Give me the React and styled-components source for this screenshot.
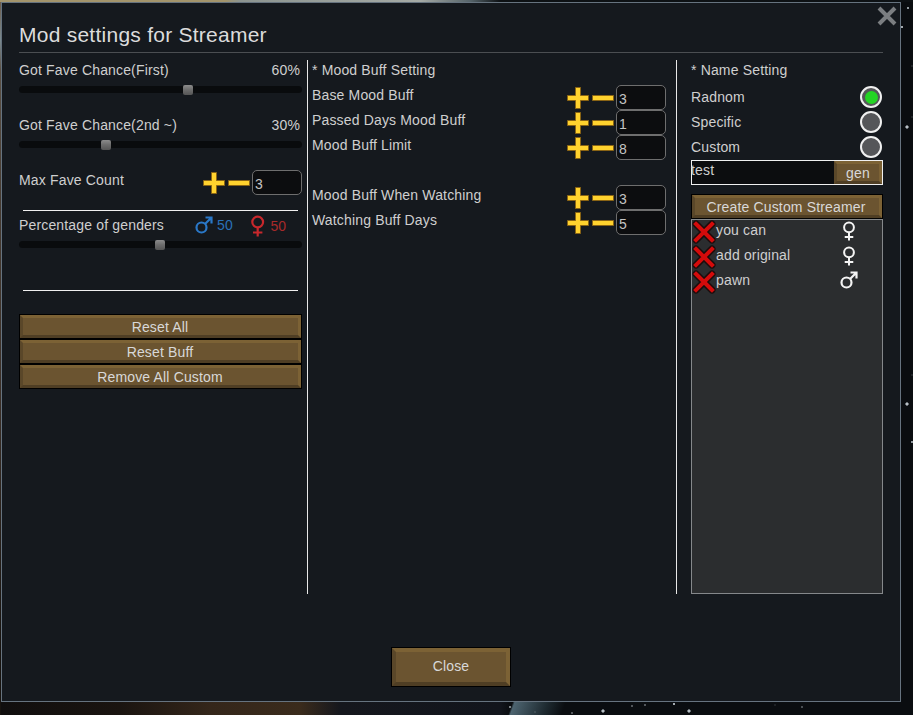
import React from 'react';
import styled, { createGlobalStyle } from 'styled-components';

const Global = createGlobalStyle`
  html, body { margin: 0; padding: 0; background: #0a0d10; }
  body { font-family: "Liberation Sans", Arial, sans-serif; }
`;

const stars = [[908,8,1.3,.7],[902,27,1.2,.8],[907,127,2,.9],[912,66,0.8,.4],[912,117,0.8,.35],[907,404,2,.9],[912,442,1.4,.7],[912,375,0.8,.4],[510,707,1,.8],[603,711,2,.9],[689,711,2,.9],[674,704,1.4,.8],[632,706,1,.5],[645,705,1,.5],[572,713,1,.5],[775,705,0.8,.35],[802,707,1,.45],[535,712,0.8,.4],[600,706,0.7,.4],[878,704,0.7,.3]];
const starLayers = stars.map(([x, y, r, a]) => `radial-gradient(circle ${r}px at ${x}px ${y}px, rgba(201,210,216,${a}) 60%, transparent 100%)`).join(',');

const Desktop = styled.div`
  width: 913px;
  height: 715px;
  overflow: hidden;
  box-sizing: border-box;
  padding: 2px 0 0 1px;
  background:
    ${starLayers},
    linear-gradient(90deg, #a3946b 0, #a3946b 225px, #8c9490 240px, #a5aaa5 420px, #56646a 470px, #0d1114 500px) 0 0 / 100% 2px no-repeat,
    linear-gradient(180deg, #6d5a46 0, #7a8a90 40px, #5b5044 70px, #453a30 200px, #3a2e26 400px, #17130f 650px) 0 0 / 1px 100% no-repeat,
    linear-gradient(110deg, transparent 0 12px, #4d6470 14px, #1e2a30 45px, transparent 62px) 500px 702px / 70px 13px no-repeat,
    linear-gradient(90deg, #100e0e 0, #1a1410 120px, #34261a 210px, #3a2b1c 300px, #15171d 340px, #12151c 500px, #0a0d10 510px) 0 702px / 510px 13px no-repeat,
    #0a0d10;
`;

const Window = styled.div`
  position: relative;
  box-sizing: border-box;
  width: 900px;
  height: 700px;
  padding: 0 17px;
  background: #15191e;
  border: 1px solid #66737f;
  color: #cfcfcf;
  font-size: 14px;
  line-height: 20px;
  letter-spacing: 0.16px;
`;

const CloseX = styled.svg`
  position: absolute;
  top: 3px;
  right: 3px;
  width: 20px;
  height: 20px;
`;

const Title = styled.div`
  box-sizing: border-box;
  height: 50px;
  padding-top: 20px;
  border-bottom: 1px solid #4b4e52;
  font-size: 21px;
  line-height: 24px;
  letter-spacing: 0.25px;
  color: #dcdcdc;
`;

const Columns = styled.div`
  display: flex;
  height: 534px;
  margin-top: 7px;
`;

const LeftColumn = styled.div`
  box-sizing: border-box;
  width: 289px;
  padding-right: 5px;
  border-right: 1px solid #e8e8e8;
`;

const MiddleColumn = styled.div`
  box-sizing: border-box;
  width: 369px;
  padding: 0 10px 0 4px;
  border-right: 1px solid #e8e8e8;
`;

const RightColumn = styled.div`
  width: 192px;
  margin-left: 14px;
`;

const SliderBlock = styled.div`
  height: 55px;
`;

const SpacedRow = styled.div`
  display: flex;
  justify-content: space-between;
  height: 20px;
  padding-right: 2px;
`;

const Track = styled.div`
  position: relative;
  height: 7px;
  margin: 6px 0 7px;
  border-radius: 3.5px;
  background: #090b0d;
`;

const Thumb = styled.div`
  position: absolute;
  top: -1px;
  width: 10px;
  height: 10px;
  margin-left: -5px;
  border-radius: 2px;
  background: linear-gradient(180deg, #8c8c8c 0, #6e6e6e 45%, #555 100%);
`;

const SpinRow = styled.div`
  display: flex;
  height: 25px;
  margin-bottom: ${p => p.$gap || 0}px;
`;

const SpinLabel = styled.div`
  flex: 1;
`;

const SpinIcons = styled.div`
  display: flex;
  align-items: flex-start;
  gap: 3px;
  padding-top: 2px;
  margin-right: 2px;
`;

const Icon = styled.svg`
  display: block;
  flex: none;
`;

const NumBox = styled.div`
  box-sizing: border-box;
  width: 50px;
  height: 25px;
  padding: 3px 0 0 2px;
  border: 1px solid #6e6e6e;
  border-radius: 5px;
  background: #0c0d0f;
  color: #c4c4c4;
`;

const Rule = styled.div`
  height: 1px;
  margin: ${p => p.$top}px 4px ${p => p.$bottom}px 4px;
  background: #f0f0f0;
`;

const GenderRow = styled.div`
  display: flex;
  align-items: flex-start;
  height: 20px;
`;

const GenderLabel = styled.div`
  width: 176px;
`;

const GenderStat = styled.div`
  display: flex;
  align-items: center;
  width: ${p => p.$w}px;
  gap: ${p => p.$gap}px;
  color: ${p => p.$color};
`;

const Bevel = styled.button`
  display: block;
  flex: none;
  box-sizing: border-box;
  width: ${p => p.$w || '100%'};
  height: ${p => p.$h || 23}px;
  margin: 1px;
  padding: 0 ${p => p.$nudge || 0}px ${p => p.$lift || 0}px 0;
  border-style: solid;
  border-width: ${p => p.$bevel || 3}px;
  border-color: #7c6235 #7c6235 #4f3e24 #5a4729;
  outline: 1px solid #000;
  background: #6b5430;
  color: #d8d8d8;
  font: inherit;
  letter-spacing: inherit;
  line-height: 16px;
  text-align: center;
`;

const ButtonStack = styled.div`
  display: flex;
  flex-direction: column;
`;

const Footer = styled.div`
  display: flex;
  justify-content: center;
  margin-top: 53px;
`;

const NameRow = styled.div`
  display: flex;
  justify-content: space-between;
  align-items: flex-start;
  box-sizing: border-box;
  height: 25px;
  padding: 2px 1px 0 0;
`;

const Radio = styled.div`
  box-sizing: border-box;
  display: flex;
  align-items: center;
  justify-content: center;
  width: 22px;
  height: 22px;
  margin-top: -1px;
  border: 2px solid #f0f0f0;
  border-radius: 50%;
  background: #555659;
  &::after {
    content: '';
    display: ${p => (p.$on ? 'block' : 'none')};
    width: 13px;
    height: 13px;
    border-radius: 50%;
    background: #24d424;
  }
`;

const NameField = styled.div`
  box-sizing: border-box;
  display: flex;
  justify-content: space-between;
  height: 25px;
  margin-bottom: 10px;
  border: 1px solid #f0f0f0;
  background: #0c0d0f;
`;

const NameText = styled.div`
  margin: -1px 0 0 -1px;
`;

const GenButton = styled(Bevel)`
  width: 48px;
  height: 23px;
  margin: 0;
  outline: none;
`;

const CreateButton = styled(Bevel)`
  width: 190px;
`;

const List = styled.div`
  box-sizing: border-box;
  height: 375px;
  border: 1px solid #85888b;
  background: #2b2d2f;
`;

const ListRow = styled.div`
  display: flex;
  align-items: flex-start;
  height: 25px;
`;

const ListName = styled.div`
  width: 121px;
`;

const ListGender = styled.div`
  width: 24px;
  display: flex;
  justify-content: center;
  padding-top: 1px;
`;

const Plus = () => (
  <Icon width="22" height="22" viewBox="0 0 22 22">
    <path d="M8.5 0.5h5v8h8v5h-8v8h-5v-8h-8v-5h8z" fill="#ffd22e" stroke="#8a6414" strokeWidth="1" />
  </Icon>
);

const Minus = () => (
  <Icon width="22" height="22" viewBox="0 0 22 22">
    <path d="M0.5 8.5h21v5h-21z" fill="#ffd22e" stroke="#8a6414" strokeWidth="1" />
  </Icon>
);

const Spin = ({ label, value, gap }) => (
  <SpinRow $gap={gap}>
    <SpinLabel>{label}</SpinLabel>
    <SpinIcons><Plus /><Minus /></SpinIcons>
    <NumBox>{value}</NumBox>
  </SpinRow>
);

const Male = ({ color, size = 18 }) => (
  <Icon width={size} height={size} viewBox="0 0 18 18" fill="none" stroke={color} strokeWidth="2.2">
    <circle cx="6.5" cy="11.5" r="5" />
    <path d="M10 8L16.5 1.5M10.5 1.5h6v6" />
  </Icon>
);

const Female = ({ color, size = 22 }) => (
  <Icon width={size * 0.7} height={size} viewBox="0 0 15.4 22" fill="none" stroke={color} strokeWidth="2.2">
    <circle cx="7.7" cy="7" r="5.4" />
    <path d="M7.7 12.5V21.5M3 17.5h9.4" />
  </Icon>
);

const RedX = () => (
  <Icon width="24" height="24" viewBox="0 0 24 24" fill="none" strokeLinecap="round">
    <path d="M4 4L20 20M20 4L4 20" stroke="#1a0c0c" strokeWidth="7" />
    <path d="M4 4L20 20M20 4L4 20" stroke="#d40b0b" strokeWidth="4" strokeLinecap="square" />
  </Icon>
);

const Slider = ({ label, value, at }) => (
  <SliderBlock>
    <SpacedRow><span>{label}</span><span>{value}</span></SpacedRow>
    <Track><Thumb style={{ left: at }} /></Track>
  </SliderBlock>
);

const people = [
  ['you can', 'f'],
  ['add original', 'f'],
  ['pawn', 'm'],
];

export default function App() {
  return (
    <>
      <Global />
      <Desktop>
        <Window>
          <CloseX viewBox="0 0 20 20">
            <path d="M2 2L18 18M18 2L2 18" stroke="#7b7e81" strokeWidth="4" />
          </CloseX>
          <Title>Mod settings for Streamer</Title>
          <Columns>
            <LeftColumn>
              <Slider label="Got Fave Chance(First)" value="60%" at={169} />
              <Slider label="Got Fave Chance(2nd ~)" value="30%" at={87} />
              <Spin label="Max Fave Count" value="3" />
              <Rule $top={15} $bottom={4} />
              <GenderRow>
                <GenderLabel>Percentage of genders</GenderLabel>
                <GenderStat $w={55} $gap={4} $color="#2a70b8"><Male color="#2a78c8" />50</GenderStat>
                <GenderStat $w={40} $gap={5} $color="#a82a2a"><Female color="#c8282c" />50</GenderStat>
              </GenderRow>
              <Track><Thumb style={{ left: 141 }} /></Track>
              <Rule $top={42} $bottom={23} />
              <ButtonStack>
                <Bevel $w="281px" $nudge={1}>Reset All</Bevel>
                <Bevel $w="281px" $nudge={1}>Reset Buff</Bevel>
                <Bevel $w="281px" $nudge={1}>Remove All Custom</Bevel>
              </ButtonStack>
            </LeftColumn>
            <MiddleColumn>
              <SpinRow>* Mood Buff Setting</SpinRow>
              <Spin label="Base Mood Buff" value="3" />
              <Spin label="Passed Days Mood Buff" value="1" />
              <Spin label="Mood Buff Limit" value="8" gap={25} />
              <Spin label="Mood Buff When Watching" value="3" />
              <Spin label="Watching Buff Days" value="5" />
            </MiddleColumn>
            <RightColumn>
              <SpinRow>* Name Setting</SpinRow>
              <NameRow>Radnom<Radio $on /></NameRow>
              <NameRow>Specific<Radio /></NameRow>
              <NameRow>Custom<Radio /></NameRow>
              <NameField>
                <NameText>test</NameText>
                <GenButton>gen</GenButton>
              </NameField>
              <CreateButton $nudge={2}>Create Custom Streamer</CreateButton>
              <List>
                {people.map(([name, g]) => (
                  <ListRow key={name}>
                    <RedX />
                    <ListName>{name}</ListName>
                    <ListGender>
                      {g === 'f' ? <Female color="#f4f4f4" size={20} /> : <Male color="#f4f4f4" />}
                    </ListGender>
                  </ListRow>
                ))}
              </List>
            </RightColumn>
          </Columns>
          <Footer>
            <Bevel $w="118px" $h={38} $bevel={4} $lift={2}>Close</Bevel>
          </Footer>
        </Window>
      </Desktop>
    </>
  );
}
